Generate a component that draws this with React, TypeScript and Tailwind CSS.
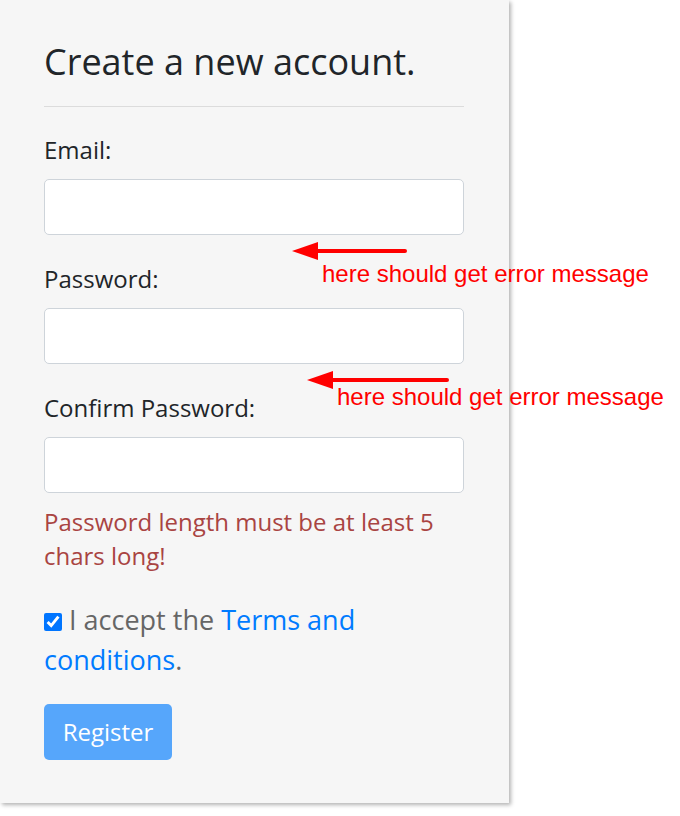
const annotations = [
  { tipX: 292, tailX: 405, y: 251, textX: 322, textY: 259 },
  { tipX: 307, tailX: 447, y: 380, textX: 337, textY: 382 },
];

function Field({ label }: { label: string }) {
  return (
    <div className="flex flex-col">
      <label className="text-[24px] leading-[36px] text-[#212529]">{label}</label>
      <input
        type="text"
        className="mt-[11px] h-[56px] w-full rounded-[5px] border border-[#ced4da] bg-white px-3 outline-none"
      />
    </div>
  );
}

export default function App() {
  return (
    <div className="relative h-[816px] w-[680px] overflow-hidden bg-white font-['Open_Sans',sans-serif]">
      {/* Form panel */}
      <div className="w-[509px] bg-[#f6f6f6] pb-[43px] pl-[44px] pr-[45px] pt-[40px] shadow-[2px_2px_4px_rgba(0,0,0,0.3)]">
        <h2 className="text-[36px] leading-[44px] text-[#212529]">Create a new account.</h2>
        <hr className="mt-[22px] border-0 border-t border-[#dcdcdc]" />

        <div className="mt-[25px] flex flex-col gap-[26px]">
          <Field label="Email:" />
          <Field label="Password:" />
          <Field label="Confirm Password:" />
        </div>

        <p className="mt-[12px] text-[24px] leading-[34px] text-[#a94442]">
          Password length must be at least 5 chars long!
        </p>

        <div className="mt-[27px] text-[27px] leading-[40px] text-[#666666]">
          <input
            type="checkbox"
            defaultChecked
            className="m-0 h-[18px] w-[18px] align-[-1px] accent-[#0075ff]"
          />{' '}
          I accept the <a className="text-[#007bff]">Terms and conditions</a>.
        </div>

        <button className="mt-[24px] h-[56px] w-[128px] rounded-[5px] bg-[#56a6fb] text-[24px] text-white">
          Register
        </button>
      </div>

      {/* Red annotations */}
      {annotations.map((a, i) => (
        <div key={i}>
          <svg className="absolute left-0 top-0" width="680" height="816">
            <line
              x1={a.tipX + 20}
              y1={a.y}
              x2={a.tailX}
              y2={a.y}
              stroke="#ff0000"
              strokeWidth="4"
              strokeLinecap="round"
            />
            <polygon
              points={`${a.tipX},${a.y} ${a.tipX + 26},${a.y - 9} ${a.tipX + 26},${a.y + 9}`}
              fill="#ff0000"
            />
          </svg>
          <span
            className="absolute whitespace-nowrap font-['Liberation_Sans',Arial,sans-serif] text-[24px] leading-[30px] text-[#ff0000]"
            style={{ left: a.textX, top: a.textY }}
          >
            here should get error message
          </span>
        </div>
      ))}
    </div>
  );
}
